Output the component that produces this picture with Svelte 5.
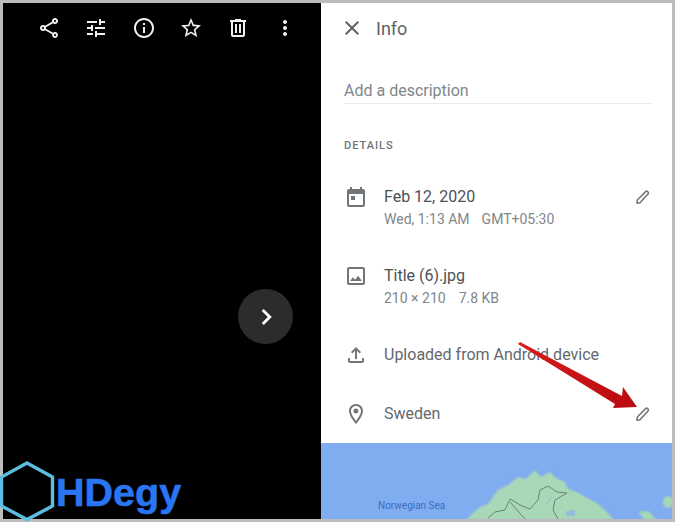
<script>
  const toolbar = [
    { name: 'share', d: 'M18 16.08c-.76 0-1.44.3-1.96.77L8.91 12.7c.05-.23.09-.46.09-.7s-.04-.47-.09-.7l7.05-4.11c.54.5 1.25.81 2.04.81 1.66 0 3-1.34 3-3s-1.34-3-3-3-3 1.34-3 3c0 .24.04.47.09.7L8.04 9.81C7.5 9.31 6.79 9 6 9c-1.66 0-3 1.34-3 3s1.34 3 3 3c.79 0 1.5-.31 2.04-.81l7.12 4.16c-.05.21-.08.43-.08.65 0 1.61 1.31 2.92 2.92 2.92s2.92-1.31 2.92-2.92-1.31-2.92-2.92-2.92zM18 4c.55 0 1 .45 1 1s-.45 1-1 1-1-.45-1-1 .45-1 1-1zM6 13c-.55 0-1-.45-1-1s.45-1 1-1 1 .45 1 1-.45 1-1 1zm12 7.02c-.55 0-1-.45-1-1s.45-1 1-1 1 .45 1 1-.45 1-1 1z' },
    { name: 'tune', d: 'M3 17v2h6v-2H3zM3 5v2h10V5H3zm10 16v-2h8v-2h-8v-2h-2v6h2zM7 9v2H3v2h4v2h2V9H7zm14 4v-2H11v2h10zm-6-4h2V7h4V5h-4V3h-2v6z' },
    { name: 'info', d: 'M11 7h2v2h-2zm0 4h2v6h-2zm1-9C6.48 2 2 6.48 2 12s4.48 10 10 10 10-4.48 10-10S17.52 2 12 2zm0 18c-4.41 0-8-3.59-8-8s3.59-8 8-8 8 3.59 8 8-3.59 8-8 8z' },
    { name: 'star', d: 'M22 9.24l-7.19-.62L12 2 9.19 8.63 2 9.24l5.46 4.73L5.82 21 12 17.27 18.18 21l-1.63-7.03L22 9.24zM12 15.4l-3.76 2.27 1-4.28-3.32-2.88 4.38-.38L12 6.1l1.71 4.04 4.38.38-3.32 2.88 1 4.28L12 15.4z' },
    { name: 'trash', d: 'M15 4V3H9v1H4v2h1v13c0 1.1.9 2 2 2h10c1.1 0 2-.9 2-2V6h1V4h-5zm2 15H7V6h10v13zM9 8h2v9H9zm4 0h2v9h-2z' },
    { name: 'more', d: 'M12 8c1.1 0 2-.9 2-2s-.9-2-2-2-2 .9-2 2 .9 2 2 2zm0 2c-1.1 0-2 .9-2 2s.9 2 2 2 2-.9 2-2-.9-2-2-2zm0 6c-1.1 0-2 .9-2 2s.9 2 2 2 2-.9 2-2-.9-2-2-2z' }
  ];
  const icons = {
    close: 'M19 6.41 17.59 5 12 10.59 6.41 5 5 6.41 10.59 12 5 17.59 6.41 19 12 13.41 17.59 19 19 17.59 13.41 12z',
    calendar: 'M19 4h-1V2h-2v2H8V2H6v2H5c-1.1 0-2 .9-2 2v14c0 1.1.9 2 2 2h14c1.1 0 2-.9 2-2V6c0-1.1-.9-2-2-2zm0 16H5V9h14v11zM7 11h4v4H7z',
    image: 'M19 3H5c-1.1 0-2 .9-2 2v14c0 1.1.9 2 2 2h14c1.1 0 2-.9 2-2V5c0-1.1-.9-2-2-2zm0 16H5V5h14v14zm-4.86-7.14-3 3.86L9 13.14 6 17h12z',
    upload: 'M18 15v3H6v-3H4v3c0 1.1.9 2 2 2h12c1.1 0 2-.9 2-2v-3h-2zM7 9l1.41 1.41L11 7.83V16h2V7.83l2.59 2.58L17 9l-5-5-5 5z',
    place: 'M12 2C8.13 2 5 5.13 5 9c0 5.25 7 13 7 13s7-7.75 7-13c0-3.87-3.13-7-7-7zM7 9c0-2.76 2.24-5 5-5s5 2.24 5 5c0 2.88-2.88 7.19-5 9.88C9.92 16.21 7 11.85 7 9zm5-2.5a2.5 2.5 0 1 0 0 5 2.5 2.5 0 0 0 0-5z'
  };
  const pencil = 'M7 18.2l.3-3.2L15.9 6.4a1 1 0 0 1 1.4 0l.9.9a1 1 0 0 1 0 1.4L10 17.7z';
</script>

<div class="frame">
  <section class="viewer">
    <nav class="toolbar">
      {#each toolbar as item (item.name)}
        <svg class="tool" viewBox="0 0 24 24" width="24" height="24" aria-label={item.name}><path d={item.d} /></svg>
      {/each}
    </nav>
    <div class="next">
      <svg viewBox="0 0 24 24" width="26" height="26"><path d="M9 5.5 15.5 12 9 18.5" /></svg>
    </div>
  </section>

  <aside class="panel">
    <header class="head">
      <svg class="icon close" viewBox="0 0 24 24" width="24" height="24"><path d={icons.close} /></svg>
      <h1>Info</h1>
    </header>

    <div class="desc">Add a description</div>
    <h2>DETAILS</h2>

    <div class="row date">
      <svg class="icon" viewBox="0 0 24 24" width="24" height="24"><path d={icons.calendar} /></svg>
      <div class="text">
        <div class="main">Feb 12, 2020</div>
        <div class="sub"><span>Wed, 1:13 AM</span><span>GMT+05:30</span></div>
      </div>
      <svg class="pencil" viewBox="0 0 24 24" width="24" height="24"><path d={pencil} /></svg>
    </div>

    <div class="row file">
      <svg class="icon" viewBox="0 0 24 24" width="24" height="24"><path d={icons.image} /></svg>
      <div class="text">
        <div class="main">Title (6).jpg</div>
        <div class="sub"><span>210 × 210</span><span>7.8 KB</span></div>
      </div>
    </div>

    <div class="row upload">
      <svg class="icon" viewBox="0 0 24 24" width="24" height="24"><path d={icons.upload} /></svg>
      <div class="text"><div class="main light">Uploaded from Android device</div></div>
    </div>

    <div class="row place">
      <svg class="icon" viewBox="0 0 24 24" width="24" height="24"><path d={icons.place} /></svg>
      <div class="text"><div class="main light">Sweden</div></div>
      <svg class="pencil" viewBox="0 0 24 24" width="24" height="24"><path d={pencil} /></svg>
    </div>

    <div class="map">
      <svg viewBox="321 443 351 76" width="351" height="76">
        <polygon class="land" points="466,520 474,512 480,507 488,504 498,490 508,485 518,477 526,479 535,470 541,477 550,472 556,478 565,482 568,489 577,492 585,497 597,503 606,511 614,520" />
        <ellipse class="land" cx="668" cy="502" rx="5" ry="6" />
        <polygon class="land" points="638,512 648,511 657,520 645,520" />
        <path class="lake" d="M552 497l-6 7M566 512l8-2 1 5-7 1z" />
        <path class="border" d="M488 518l7-6 10-2 5-11 10 6 10 4 8-9 2-10 8-4 9 6 10 1M510 502l15 17M567 493l-12 7-2 10 5 9" />
      </svg>
      <span class="sea">Norwegian Sea</span>
    </div>
  </aside>

  <svg class="arrow" viewBox="0 0 675 522" width="675" height="522" aria-hidden="true">
    <defs>
      <linearGradient id="red" x1="0" y1="0" x2="1" y2="1">
        <stop offset="0" stop-color="#d81d1d" />
        <stop offset="1" stop-color="#b80a0f" />
      </linearGradient>
    </defs>
    <polygon fill="url(#red)" points="518,344 520,342 622,396 623,387 637,407 613,408 615,404" />
  </svg>

  <div class="logo">
    <svg viewBox="0 0 60 62" width="60" height="62"><polygon points="27,3 52.5,17 52.5,46 27,59.5 1.5,46 1.5,17" /></svg>
    <span>HDegy</span>
  </div>
</div>

<style>
  :global(body) {
    margin: 0;
    background: #bcbcbc;
  }
  .frame {
    position: relative;
    width: 675px;
    height: 522px;
    box-sizing: border-box;
    padding: 3px;
    display: flex;
    overflow: hidden;
    font-family: Roboto, "Liberation Sans", sans-serif;
  }
  .viewer {
    position: relative;
    width: 318px;
    background: #000;
  }
  .toolbar {
    display: flex;
    gap: 23.3px;
    padding: 13px 0 0 34px;
  }
  .tool {
    fill: #f1f1f1;
    flex: none;
  }
  .next {
    position: absolute;
    left: 235px;
    top: 286px;
    width: 55px;
    height: 55px;
    border-radius: 50%;
    background: #2c2c2c;
    display: flex;
    align-items: center;
    justify-content: center;
  }
  .next path {
    fill: none;
    stroke: #fff;
    stroke-width: 2.6;
  }
  .panel {
    width: 351px;
    background: #fff;
    display: flex;
    flex-direction: column;
    padding-left: 23px;
    box-sizing: border-box;
    color: #5f6368;
  }
  .icon {
    fill: #70757a;
    flex: none;
  }
  .icon.close {
    fill: #5f6368;
  }
  .head {
    display: flex;
    align-items: center;
    gap: 12px;
    height: 50px;
    margin-left: -4px;
  }
  h1 {
    margin: 0;
    font-size: 18px;
    font-weight: 400;
    color: #5f6368;
  }
  .desc {
    margin-top: 23px;
    width: 308px;
    height: 27px;
    line-height: 29px;
    font-size: 16px;
    color: #80868b;
    border-bottom: 1px solid #e8eaed;
  }
  h2 {
    margin: 34px 0 0;
    height: 16px;
    line-height: 16px;
    font-size: 11px;
    font-weight: 500;
    letter-spacing: 1px;
    color: #70757a;
  }
  .row {
    display: flex;
    align-items: center;
    gap: 16px;
    padding-right: 18px;
    height: 24px;
  }
  .row .text {
    flex: 1;
  }
  .date {
    margin-top: 28px;
    height: 44px;
    align-items: flex-start;
  }
  .file {
    margin-top: 35px;
    height: 44px;
    align-items: flex-start;
  }
  .upload {
    margin-top: 38px;
  }
  .place {
    margin-top: 35px;
  }
  .date .icon, .file .icon, .date .pencil {
    margin-top: 3px;
  }
  .date .text, .file .text {
    margin-top: 4px;
  }
  .main {
    font-size: 16px;
    line-height: 22px;
    color: #4d5155;
    white-space: nowrap;
  }
  .main.light {
    color: #64686c;
  }
  .sub {
    display: flex;
    gap: 12px;
    font-size: 14px;
    line-height: 22px;
    color: #80868b;
    white-space: nowrap;
  }
  .file .sub {
    gap: 13px;
  }
  .pencil {
    flex: none;
  }
  .pencil path {
    fill: none;
    stroke: #757575;
    stroke-width: 1.6;
    stroke-linejoin: round;
  }
  .map {
    position: relative;
    margin: 17px 0 0 -23px;
    height: 76px;
    background: #80acf0;
    overflow: hidden;
  }
  .map svg {
    display: block;
  }
  .land {
    fill: #a9d8b6;
    filter: blur(1.2px);
  }
  .lake {
    fill: #8fc0d8;
    stroke: #8fbbdd;
    stroke-width: 1;
  }
  .border {
    fill: none;
    stroke: #5f7d6c;
    stroke-width: 0.9;
  }
  .sea {
    position: absolute;
    left: 57px;
    top: 56px;
    font-size: 10px;
    line-height: 13px;
    color: #3b6fc4;
  }
  .arrow {
    position: absolute;
    left: 0;
    top: 0;
    pointer-events: none;
  }
  .logo {
    position: absolute;
    left: 0;
    top: 460px;
    display: flex;
    align-items: flex-start;
  }
  .logo svg {
    flex: none;
  }
  .logo polygon {
    fill: none;
    stroke: #5bbde0;
    stroke-width: 3.4;
  }
  .logo span {
    margin: 9px 0 0 -4px;
    font-family: "Liberation Sans", Arial, sans-serif;
    font-weight: 700;
    font-size: 39.5px;
    line-height: 46px;
    color: #2a75f3;
    -webkit-text-stroke: 0.6px #2a75f3;
  }
</style>
